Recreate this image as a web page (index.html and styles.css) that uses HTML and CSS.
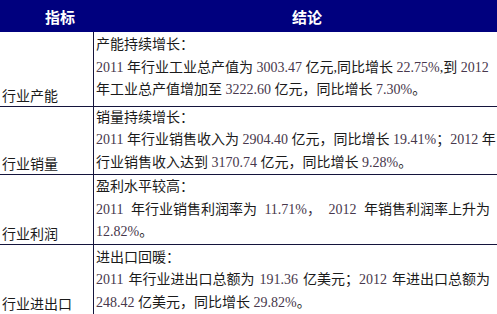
FILE: index.html
```html
<!DOCTYPE html>
<html lang="zh">
<head>
<meta charset="utf-8">
<link rel="stylesheet" href="styles.css">
</head>
<body>
<div class="table">
  <div class="head">
    <div class="h h1">指标</div>
    <div class="h h2">结论</div>
  </div>
  <div class="row r1">
    <div class="label">行业产能</div>
    <div class="text">
      <div class="ln">产能持续增长：</div>
      <div class="ln"><span class="n">2011</span> 年行业工业总产值为 <span class="n">3003.47</span> 亿元,同比增长 <span class="n">22.75%</span>,到 <span class="n">2012</span></div>
      <div class="ln">年工业总产值增加至 <span class="n">3222.60</span> 亿元，同比增长 <span class="n">7.30%</span>。</div>
    </div>
  </div>
  <div class="row r2">
    <div class="label">行业销量</div>
    <div class="text">
      <div class="ln">销量持续增长：</div>
      <div class="ln"><span class="n">2011</span> 年行业销售收入为 <span class="n">2904.40</span> 亿元，同比增长 <span class="n">19.41%</span>；<span class="n">2012</span> 年</div>
      <div class="ln">行业销售收入达到 <span class="n">3170.74</span> 亿元，同比增长 <span class="n">9.28%</span>。</div>
    </div>
  </div>
  <div class="row r3">
    <div class="label">行业利润</div>
    <div class="text">
      <div class="ln">盈利水平较高：</div>
      <div class="ln just"><span class="n">2011</span><span>年行业销售利润率为</span><span class="n">11.71%，</span><span class="n">2012</span><span>年销售利润率上升为</span></div>
      <div class="ln"><span class="n">12.82%</span>。</div>
    </div>
  </div>
  <div class="row r4">
    <div class="label">行业进出口</div>
    <div class="text">
      <div class="ln">进出口回暖：</div>
      <div class="ln just"><span class="n">2011</span><span>年行业进出口总额为</span><span class="n">191.36</span><span>亿美元；<span class="n">2012</span></span><span>年进出口总额为</span></div>
      <div class="ln"><span class="n">248.42</span> 亿美元，同比增长 <span class="n">29.82%</span>。</div>
    </div>
  </div>
</div>
</body>
</html>
```
FILE: styles.css
```css
html, body {
  margin: 0;
  padding: 0;
  background: #ffffff;
}
.table {
  width: 497px;
  font-family: "Liberation Serif", "Noto Sans CJK SC", serif;
  font-size: 14px;
  color: #1a1a1a;
}
.head {
  display: flex;
  height: 32px;
  background: #00007e;
  color: #ffffff;
  font-family: "Noto Sans CJK SC", sans-serif;
  font-weight: bold;
  font-size: 15px;
}
.h {
  display: flex;
  align-items: center;
  justify-content: center;
}
.h1 { width: 120px; }
.h2 { width: 374px; }
.row {
  display: grid;
  grid-template-columns: 94px 1fr;
  border-bottom: 1px solid #14143c;
}
.label {
  display: flex;
  align-items: flex-end;
  padding: 0 0 0 2px;
  border-right: 1px solid #14143c;
  line-height: 22px;
  font-family: "Noto Sans CJK SC", sans-serif;
}
.text {
  padding-left: 2px;
}
.ln {
  line-height: 22.5px;
  height: 22.5px;
  white-space: nowrap;
  font-family: "Liberation Serif", "Noto Sans CJK SC", serif;
}
.n {
  color: #47374c;
}
.just {
  display: flex;
  justify-content: space-between;
  width: 394px;
}
.r1 .text { padding-top: 2px; padding-bottom: 4px; }
.r2 .text { padding-top: 0; padding-bottom: 0; }
.r3 .text { padding-top: 1px; padding-bottom: 0; }
.r4 .text { padding-top: 2px; padding-bottom: 0; }
```
